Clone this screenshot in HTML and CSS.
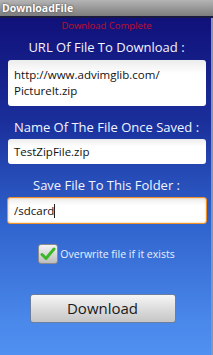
FILE: index.html
```html
<!DOCTYPE html>
<html>
<head>
  <link rel="stylesheet" href="styles.css">
</head>
<body>
  <div class="titlebar">DownloadFile</div>

  <div class="content">
    <div class="status">Download Complete</div>

    <div class="field">
      <div class="field-label">URL Of File To Download :</div>
      <div class="text-box tall">http://www.advimglib.com/<br>PictureIt.zip</div>
    </div>

    <div class="field">
      <div class="field-label">Name Of The File Once Saved :</div>
      <div class="text-box">TestZipFile.zip</div>
    </div>

    <div class="field">
      <div class="field-label">Save File To This Folder :</div>
      <div class="text-box focused">/sdcard<span class="cursor"></span></div>
    </div>

    <div class="check-row">
      <span class="check-box">
        <svg width="16" height="16" viewBox="0 0 16 16">
          <path d="M2 8.5 L6 12.5 L14 3" fill="none" stroke="#3ab82a" stroke-width="3" stroke-linecap="round" stroke-linejoin="round"/>
        </svg>
      </span>
      <span class="check-label">Overwrite file if it exists</span>
    </div>

    <div class="button-row">
      <div class="button">Download</div>
    </div>
  </div>
</body>
</html>
```

FILE: styles.css
```css
body {
  margin: 0;
  width: 213px;
  height: 355px;
  overflow: hidden;
  font-family: "Open Sans", "DejaVu Sans", sans-serif;
  display: flex;
  flex-direction: column;
  background: #4f8ff0;
}

.titlebar {
  height: 16px;
  line-height: 16px;
  padding-left: 2px;
  font-size: 10.5px;
  font-weight: bold;
  color: #fff;
  text-shadow: 0 0 2px #333;
  background: linear-gradient(#b4b4b4, #7c7c7c);
  border-bottom: 2px solid #1a1a40;
}

.content {
  flex: 1;
  background: linear-gradient(#11117a 0%, #1a2e9a 30%, #2f62cc 60%, #4a88ea 90%, #4f90f0 100%);
  border-right: 2px solid #8a93b0;
  padding: 1px 5px 0 7px;
}

.status {
  text-align: center;
  color: #c0102a;
  font-size: 9.5px;
  height: 14px;
  line-height: 14px;
}

.field-label {
  text-align: center;
  color: #f2f4ff;
  font-size: 13px;
  line-height: 16px;
  padding: 6px 0 5px;
}

.field + .field .field-label {
  padding: 13px 0 4px;
}

.text-box {
  background: linear-gradient(#ececec, #ffffff 30%);
  border-radius: 3px;
  margin-left: 1px;
  padding: 5px 6px;
  height: 15px;
  font-size: 11.5px;
  line-height: 15px;
  color: #111;
}

.text-box.tall {
  height: 32px;
  padding: 7px 6px;
  line-height: 16px;
}

.text-box.focused {
  margin-left: 0;
  margin-right: -1px;
  border: 1px solid #f0902a;
  box-shadow: inset 0 0 2px #f7b060;
  padding: 5px 6px;
}

.cursor {
  display: inline-block;
  width: 1px;
  height: 14px;
  background: #222;
  vertical-align: -3px;
}

.check-row {
  display: flex;
  align-items: center;
  justify-content: center;
  gap: 2px;
  margin-top: 20px;
}

.check-box {
  width: 20px;
  height: 20px;
  border-radius: 3px;
  background: linear-gradient(#f4f4f4, #bdbdbd);
  border: 1px solid #8c8c8c;
  display: flex;
  align-items: center;
  justify-content: center;
  box-sizing: border-box;
}

.check-label {
  color: #e8f0ff;
  font-size: 10.5px;
}

.button-row {
  display: flex;
  justify-content: center;
  margin-top: 30px;
  padding-right: 8px;
}

.button {
  width: 144px;
  height: 27px;
  line-height: 27px;
  text-align: center;
  font-size: 15px;
  color: #1a1a1a;
  border-radius: 3px;
  border: 1px solid #6b7ea0;
  background: linear-gradient(#f6f6f6, #d8d8d8 60%, #c6c6c6);
}
```
